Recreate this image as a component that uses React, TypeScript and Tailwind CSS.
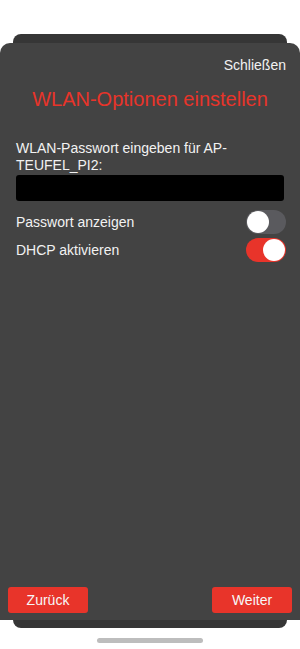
import { useState } from 'react';

function Toggle({ on }: { on: boolean }) {
  return (
    <div
      className={
        on
          ? '-mr-[2px] flex h-6 w-10 items-center justify-end rounded-full bg-[#e8342a] px-px'
          : '-mr-[2px] flex h-6 w-10 items-center justify-start rounded-full bg-[#5a5a5e] px-px'
      }
    >
      <div className="h-[22px] w-[22px] rounded-full bg-white" />
    </div>
  );
}

export default function App() {
  const [showPassword] = useState(false);
  const [dhcp] = useState(true);

  return (
    <div
      className="flex min-h-[649px] w-[300px] flex-col items-center bg-white pt-[34px]"
      style={{ fontFamily: '"Liberation Sans", Arial, sans-serif' }}
    >
      {/* sheet behind */}
      <div className="h-[594px] w-[274px] rounded-lg bg-[#363636]">
        {/* front sheet */}
        <div className="-mx-[13px] mt-[9px] flex h-[577px] flex-col rounded-t-[10px] bg-[#434343] pb-[7px]">
          <div className="flex justify-end pr-[14px] pt-[14px]">
            <button className="text-[14px] leading-[17px] text-[#f2f2f2]">Schließen</button>
          </div>
          <h1 className="mt-[13px] text-center text-[20px] leading-[24px] text-[#e8342a]">
            WLAN-Optionen einstellen
          </h1>
          <div className="mt-[29px] px-4">
            <p className="text-[14px] leading-[17px] text-[#f2f2f2]">
              WLAN-Passwort eingeben für AP-TEUFEL_PI2:
            </p>
            <input
              type={showPassword ? 'text' : 'password'}
              className="mt-px block h-[26px] w-full rounded-[3px] bg-black px-2 text-[14px] text-white outline-none"
            />
            <div className="mt-[7px] flex h-7 items-center justify-between">
              <span className="text-[14px] leading-[17px] text-[#f2f2f2]">Passwort anzeigen</span>
              <Toggle on={showPassword} />
            </div>
            <div className="flex h-7 items-center justify-between">
              <span className="text-[14px] leading-[17px] text-[#f2f2f2]">DHCP aktivieren</span>
              <Toggle on={dhcp} />
            </div>
          </div>
          <div className="mt-auto flex justify-between px-2">
            <button className="h-[26px] w-20 rounded-[3px] bg-[#e8342a] text-[14px] text-[#f7f7f7]">
              Zurück
            </button>
            <button className="h-[26px] w-20 rounded-[3px] bg-[#e8342a] text-[14px] text-[#f7f7f7]">
              Weiter
            </button>
          </div>
        </div>
      </div>
      <div className="mt-[10px] h-[5px] w-[106px] rounded-full bg-[#bdbdbd]" />
    </div>
  );
}
